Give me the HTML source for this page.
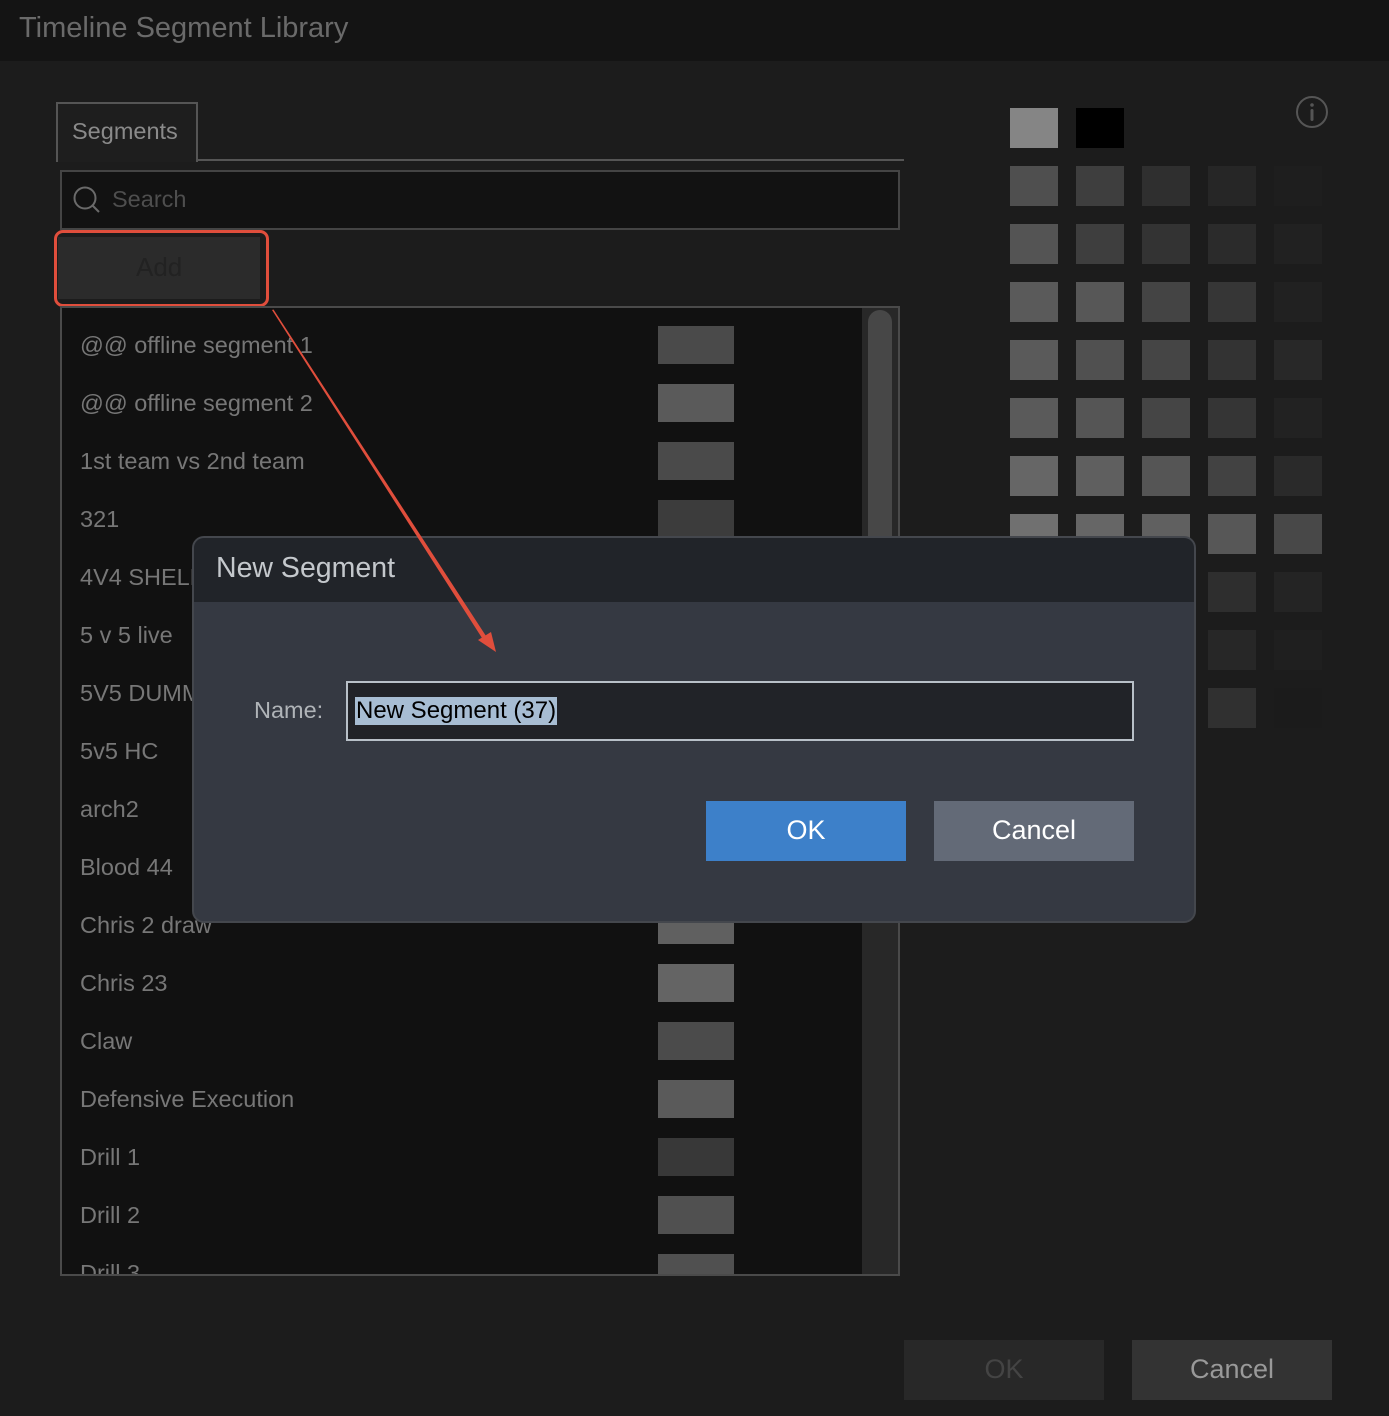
<!DOCTYPE html>
<html><head><meta charset="utf-8"><style>
*{margin:0;padding:0;box-sizing:border-box}
body{width:1389px;height:1416px;background:#1c1c1c;font-family:"Liberation Sans",sans-serif;position:relative;overflow:hidden}
.a{position:absolute}
.row{position:absolute;left:18px;height:58px;line-height:58px;font-size:23.5px;color:#777;white-space:nowrap}
.sw{position:absolute;left:596px;width:76px;height:38px}
.g{position:absolute;width:48px;height:40px}
</style></head><body>
<div class="a" style="left:0;top:0;width:1389px;height:61px;background:#141414"></div>
<div class="a" style="left:19px;top:12px;font-size:29px;color:#6a6a6a">Timeline Segment Library</div>

<div class="a" style="left:56px;top:102px;width:142px;height:60px;border:2px solid #555;border-bottom:none;background:#1e1e1e"></div>
<div class="a" style="left:196px;top:159px;width:708px;height:2px;background:#555"></div>
<div class="a" style="left:72px;top:118px;font-size:23.5px;color:#8a8a8a">Segments</div>

<div class="a" style="left:60px;top:170px;width:840px;height:60px;background:#121212;border:2px solid #444"></div>
<svg class="a" style="left:72px;top:185px" width="30" height="30" viewBox="0 0 30 30"><circle cx="13" cy="13" r="10.5" fill="none" stroke="#6a6a6a" stroke-width="2"/><line x1="20.5" y1="20.5" x2="27" y2="27" stroke="#6a6a6a" stroke-width="2"/></svg>
<div class="a" style="left:112px;top:186px;font-size:23.5px;color:#4e4e4e">Search</div>

<div class="a" style="left:58px;top:237px;width:202px;height:62px;background:#2b2b2b"></div>
<div class="a" style="left:136px;top:252px;font-size:26px;color:#222">Add</div>
<div class="a" style="left:54px;top:230px;width:215px;height:77px;border:3px solid #e04e3c;border-radius:9px"></div>

<div class="a" style="left:60px;top:306px;width:840px;height:970px;border:2px solid #4a4a4a;background:#111;overflow:hidden">
 <div class="a" style="left:800px;top:0;width:38px;height:966px;background:#282828"></div>
 <div class="a" style="left:806px;top:2px;width:24px;height:240px;background:#474747;border-radius:12px"></div>
 <div class="row" style="top:8px">@@ offline segment 1</div><div class="sw" style="top:18px;background:#4a4a4a"></div>
 <div class="row" style="top:66px">@@ offline segment 2</div><div class="sw" style="top:76px;background:#5a5a5a"></div>
 <div class="row" style="top:124px">1st team vs 2nd team</div><div class="sw" style="top:134px;background:#4a4a4a"></div>
 <div class="row" style="top:182px">321</div><div class="sw" style="top:192px;background:#3c3c3c"></div>
 <div class="row" style="top:240px">4V4 SHELL</div>
 <div class="row" style="top:298px">5 v 5 live</div>
 <div class="row" style="top:356px">5V5 DUMMY</div>
 <div class="row" style="top:414px">5v5 HC</div>
 <div class="row" style="top:472px">arch2</div>
 <div class="row" style="top:530px">Blood 44</div>
 <div class="row" style="top:588px">Chris 2 draw</div><div class="sw" style="top:598px;background:#606060"></div>
 <div class="row" style="top:646px">Chris 23</div><div class="sw" style="top:656px;background:#646464"></div>
 <div class="row" style="top:704px">Claw</div><div class="sw" style="top:714px;background:#4b4b4b"></div>
 <div class="row" style="top:762px">Defensive Execution</div><div class="sw" style="top:772px;background:#5a5a5a"></div>
 <div class="row" style="top:820px">Drill 1</div><div class="sw" style="top:830px;background:#383838"></div>
 <div class="row" style="top:878px">Drill 2</div><div class="sw" style="top:888px;background:#505050"></div>
 <div class="row" style="top:936px">Drill 3</div><div class="sw" style="top:946px;background:#505050"></div>
</div>

<div class="g" style="left:1010px;top:108px;background:#858585"></div>
<div class="g" style="left:1076px;top:108px;background:#000"></div>
<div class="g" style="left:1010px;top:166px;background:#4f4f4f"></div><div class="g" style="left:1076px;top:166px;background:#3e3e3e"></div><div class="g" style="left:1142px;top:166px;background:#2f2f2f"></div><div class="g" style="left:1208px;top:166px;background:#262626"></div><div class="g" style="left:1274px;top:166px;background:#1e1e1e"></div>
<div class="g" style="left:1010px;top:224px;background:#545454"></div><div class="g" style="left:1076px;top:224px;background:#3e3e3e"></div><div class="g" style="left:1142px;top:224px;background:#333"></div><div class="g" style="left:1208px;top:224px;background:#2b2b2b"></div><div class="g" style="left:1274px;top:224px;background:#212121"></div>
<div class="g" style="left:1010px;top:282px;background:#5a5a5a"></div><div class="g" style="left:1076px;top:282px;background:#575757"></div><div class="g" style="left:1142px;top:282px;background:#444"></div><div class="g" style="left:1208px;top:282px;background:#363636"></div><div class="g" style="left:1274px;top:282px;background:#212121"></div>
<div class="g" style="left:1010px;top:340px;background:#5a5a5a"></div><div class="g" style="left:1076px;top:340px;background:#505050"></div><div class="g" style="left:1142px;top:340px;background:#454545"></div><div class="g" style="left:1208px;top:340px;background:#333"></div><div class="g" style="left:1274px;top:340px;background:#282828"></div>
<div class="g" style="left:1010px;top:398px;background:#5a5a5a"></div><div class="g" style="left:1076px;top:398px;background:#555"></div><div class="g" style="left:1142px;top:398px;background:#454545"></div><div class="g" style="left:1208px;top:398px;background:#353535"></div><div class="g" style="left:1274px;top:398px;background:#222"></div>
<div class="g" style="left:1010px;top:456px;background:#666"></div><div class="g" style="left:1076px;top:456px;background:#5f5f5f"></div><div class="g" style="left:1142px;top:456px;background:#555"></div><div class="g" style="left:1208px;top:456px;background:#424242"></div><div class="g" style="left:1274px;top:456px;background:#2a2a2a"></div>
<div class="g" style="left:1010px;top:514px;background:#707070"></div><div class="g" style="left:1076px;top:514px;background:#666"></div><div class="g" style="left:1142px;top:514px;background:#606060"></div><div class="g" style="left:1208px;top:514px;background:#575757"></div><div class="g" style="left:1274px;top:514px;background:#484848"></div>
<div class="g" style="left:1208px;top:572px;background:#2e2e2e"></div><div class="g" style="left:1274px;top:572px;background:#242424"></div>
<div class="g" style="left:1208px;top:630px;background:#272727"></div><div class="g" style="left:1274px;top:630px;background:#1f1f1f"></div>
<div class="g" style="left:1208px;top:688px;background:#303030"></div><div class="g" style="left:1274px;top:688px;background:#1b1b1b"></div>

<svg class="a" style="left:1295px;top:95px" width="34" height="34" viewBox="0 0 34 34"><circle cx="17" cy="17" r="15" fill="none" stroke="#555" stroke-width="2"/><circle cx="17" cy="10" r="1.8" fill="#555"/><rect x="15.5" y="14" width="3" height="12" rx="1.5" fill="#555"/></svg>

<div class="a" style="left:192px;top:536px;width:1004px;height:387px;background:#353942;border:2px solid #44474d;border-radius:12px;overflow:hidden">
 <div class="a" style="left:0;top:0;width:1002px;height:64px;background:#212429"></div>
</div>
<div class="a" style="left:216px;top:552px;font-size:28.5px;color:#c4c8cc">New Segment</div>
<div class="a" style="left:254px;top:697px;font-size:23.5px;color:#b0b4b8">Name:</div>
<div class="a" style="left:346px;top:681px;width:788px;height:60px;background:#212328;border:2px solid #b8c0c8"></div>
<div class="a" style="left:355px;top:697px;height:28px;padding:0 1px;background:#a7bdd3;font-size:24px;line-height:28px;color:#000">New Segment (37)</div>
<div class="a" style="left:706px;top:801px;width:200px;height:60px;background:#3d80c9;color:#fff;font-size:27px;line-height:58px;text-align:center">OK</div>
<div class="a" style="left:934px;top:801px;width:200px;height:60px;background:#636a77;color:#fff;font-size:27px;line-height:58px;text-align:center">Cancel</div>

<svg class="a" style="left:0;top:0" width="1389" height="1416"><polygon points="272,310 273.5,309.5 486,636 482,638" fill="#e04e3c"/><polygon points="496,652 478,640 491,632" fill="#e04e3c"/></svg>

<div class="a" style="left:904px;top:1340px;width:200px;height:60px;background:#282828;color:#444;font-size:27px;line-height:58px;text-align:center">OK</div>
<div class="a" style="left:1132px;top:1340px;width:200px;height:60px;background:#333;color:#999;font-size:27px;line-height:58px;text-align:center">Cancel</div>
</body></html>
